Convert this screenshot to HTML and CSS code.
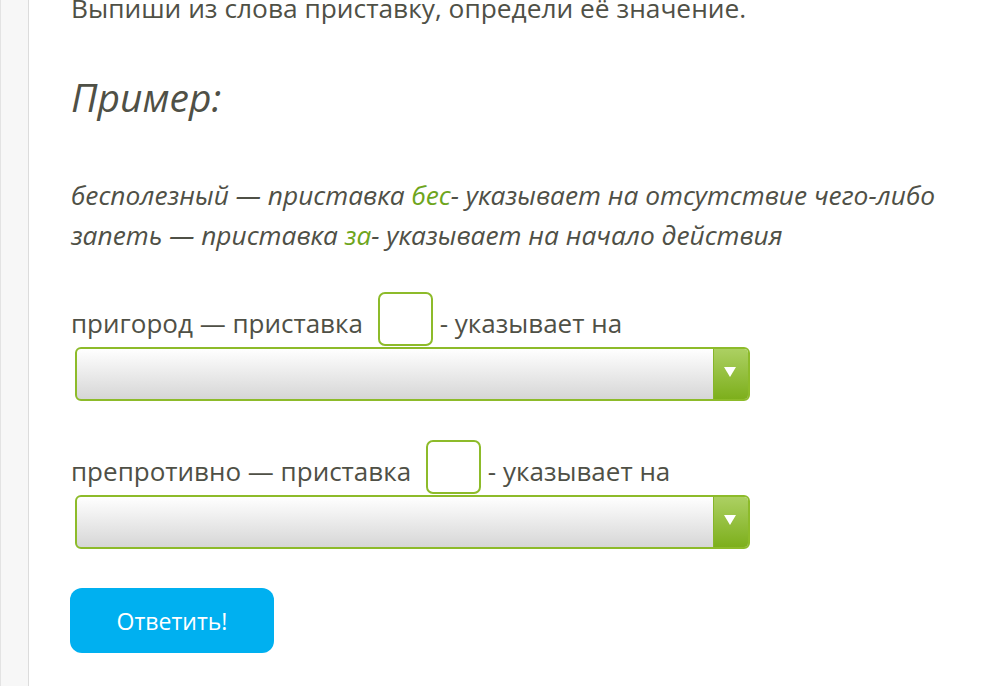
FILE: index.html
```html
<!DOCTYPE html>
<html lang="ru">
<head>
    <meta charset="UTF-8">
    <title>Приставки</title>
    <link rel="stylesheet" href="styles.css">
</head>
<body>
    <div class="side"></div>
    <div class="task">
        <p class="title">Выпиши из слова приставку, определи её значение.</p>
        <p class="example-head">Пример:</p>
        <div class="example">
            <p>бесполезный — приставка <span class="hl">бес</span>- указывает на отсутствие чего-либо</p>
            <p>запеть — приставка <span class="hl">за</span>- указывает на начало действия</p>
        </div>

        <div class="question">
            <p class="q-line">пригород — приставка<span class="box"></span> - указывает на</p>
            <div class="select"><span class="arrow"></span></div>
        </div>

        <div class="question">
            <p class="q-line">препротивно — приставка<span class="box"></span> - указывает на</p>
            <div class="select"><span class="arrow"></span></div>
        </div>

        <button class="answer">Ответить!</button>
    </div>
</body>
</html>
```

FILE: styles.css
```css
body {
    margin: 0;
    font-family: "Open Sans", sans-serif;
    color: #4f5046;
    background: #fff;
    display: flex;
    min-height: 100vh;
    overflow: hidden;
}
.side {
    width: 27px;
    flex-shrink: 0;
    background: #f7f7f7;
    border-left: 1px solid #e3e3e3;
    border-right: 1px solid #dcdcdc;
}
.task {
    padding-left: 42px;
    flex: 1;
}
p {
    margin: 0;
}
.title {
    font-size: 26.3px;
    line-height: 36px;
    margin-top: -10px;
}
.example-head {
    font-size: 39px;
    font-style: italic;
    line-height: 50px;
    margin-top: 46px;
}
.example {
    margin-top: 53px;
    font-size: 26.3px;
    font-style: italic;
    line-height: 40px;
}
.hl {
    color: #6ea51d;
}
.question {
    margin-top: 37px;
}
.question + .question {
    margin-top: 39px;
}
.q-line {
    font-size: 26px;
    line-height: 30px;
}
.box {
    display: inline-block;
    width: 51px;
    height: 50px;
    border: 2px solid #8dbb2a;
    border-radius: 7px;
    vertical-align: -13px;
    margin-left: 15px;
}
.select {
    display: flex;
    justify-content: flex-end;
    width: 671px;
    height: 50px;
    margin-top: 1px;
    margin-left: 4px;
    border: 2px solid #8dbb2a;
    border-radius: 6px;
    background: linear-gradient(#ffffff, #d6d6d6);
    overflow: hidden;
}
.arrow {
    width: 34px;
    background: linear-gradient(#acd062, #7daf1c);
    border-left: 1px solid #86b52a;
    position: relative;
}
.arrow::after {
    content: "";
    position: absolute;
    left: 10px;
    top: 18px;
    border-left: 6px solid transparent;
    border-right: 6px solid transparent;
    border-top: 10px solid #fff;
}
.answer {
    display: block;
    margin-top: 39px;
    margin-left: -1px;
    width: 204px;
    height: 65px;
    border: none;
    border-radius: 12px;
    background: #00b0f0;
    color: #fff;
    font-family: "Open Sans", sans-serif;
    font-size: 23px;
}
```
